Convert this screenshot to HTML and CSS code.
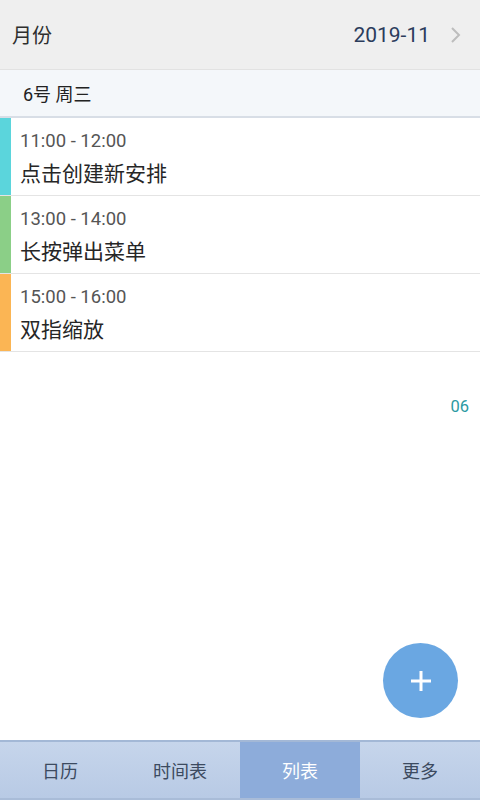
FILE: index.html
```html
<!DOCTYPE html>
<html lang="zh">
<head>
<meta charset="utf-8">
<link rel="stylesheet" href="styles.css">
</head>
<body>
<div class="app">
  <header class="topbar">
    <span class="title">月份</span>
    <span class="month">2019-11</span>
    <svg class="chev" width="12" height="18" viewBox="0 0 12 18"><path d="M2 2 L9 9 L2 16" fill="none" stroke="#bdbdbd" stroke-width="2"/></svg>
  </header>
  <div class="datebar">6号 周三</div>
  <ul class="list">
    <li class="item"><span class="bar cyan"></span><div class="text"><div class="time">11:00 - 12:00</div><div class="name">点击创建新安排</div></div></li>
    <li class="item"><span class="bar green"></span><div class="text"><div class="time">13:00 - 14:00</div><div class="name">长按弹出菜单</div></div></li>
    <li class="item"><span class="bar orange"></span><div class="text"><div class="time">15:00 - 16:00</div><div class="name">双指缩放</div></div></li>
  </ul>
  <div class="daymark">06</div>
  <div class="spacer"></div>
  <button class="fab"><svg width="24" height="24" viewBox="0 0 24 24"><path d="M12 2 V22 M2 12 H22" stroke="#fff" stroke-width="3"/></svg></button>
  <nav class="tabs">
    <div class="tab">日历</div>
    <div class="tab">时间表</div>
    <div class="tab active">列表</div>
    <div class="tab">更多</div>
  </nav>
</div>
</body>
</html>
```
FILE: styles.css
```css
* { box-sizing: border-box; }
html, body { margin: 0; padding: 0; }
body { font-family: Roboto, "Noto Sans CJK SC", sans-serif; background: #fff; }
.app { position: relative; width: 480px; height: 800px; display: flex; flex-direction: column; overflow: hidden; }
.topbar { height: 70px; background: #efefef; border-bottom: 1px solid #e2e2e2; display: flex; align-items: center; padding: 0 18px 0 12px; }
.title { font-size: 20px; color: #2e2e2e; flex: 1; }
.month { font-size: 21px; color: #2b3c5c; margin-right: 20px; }
.chev { display: block; }
.datebar { height: 48px; background: #f4f7fa; border-bottom: 2px solid #d8dee6; display: flex; align-items: center; padding-left: 23px; font-size: 18px; color: #222; }
.list { list-style: none; margin: 0; padding: 0; }
.item { display: flex; height: 78px; border-bottom: 1px solid #e4e4e4; }
.bar { width: 11px; flex: none; }
.cyan { background: #5bd5dc; }
.green { background: #8bcf87; }
.orange { background: #fbb554; }
.text { padding: 10px 0 0 9px; }
.time { font-size: 18.5px; color: #555; line-height: 26px; }
.name { font-size: 21px; color: #262626; line-height: 32px; margin-top: 4px; }
.daymark { text-align: right; padding: 45px 11px 0 0; font-size: 16.5px; color: #2b9aa2; }
.spacer { flex: 1; }
.fab { position: absolute; right: 22px; bottom: 82px; width: 75px; height: 75px; border-radius: 50%; border: none; background: #6aa7e2; display: flex; align-items: center; justify-content: center; padding: 0; }
.tabs { height: 60px; display: flex; border-top: 2px solid #a3b8d6; border-bottom: 2px solid #a9bcd8; background: linear-gradient(#c6d5eb, #b8cae5); }
.tab { flex: 1; display: flex; align-items: center; justify-content: center; font-size: 18px; color: #3c4a60; }
.tab.active { background: #8dacda; color: #fff; }
```
